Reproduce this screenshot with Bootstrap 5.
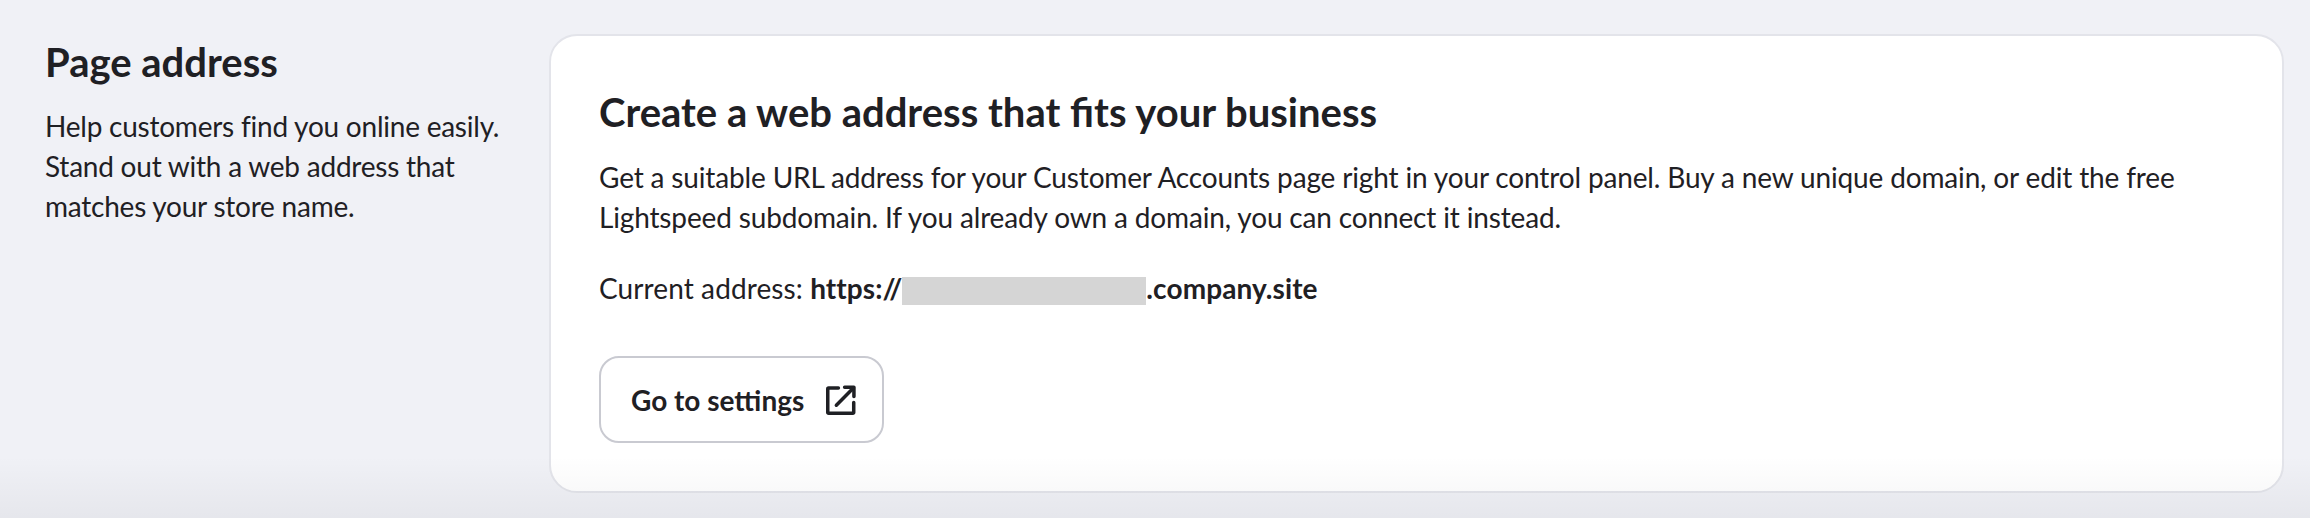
<!DOCTYPE html>
<html lang="en"><head><meta charset="utf-8"><title>Page address</title>
<link href="https://cdn.jsdelivr.net/npm/bootstrap@5.3.0/dist/css/bootstrap.min.css" rel="stylesheet">
<style>
html,body{height:518px;overflow:hidden}
body{background:#f0f1f6;font-family:Lato,"Liberation Sans",sans-serif;color:#1f2024;font-size:28px;letter-spacing:-.15px;line-height:40px;position:relative}
.page-wrap{padding:34px 26px 0 45px;gap:34px}
.side-col{width:470px;flex:none}
.side-title{font-size:40px;line-height:48px;font-weight:700;letter-spacing:0;margin:4px 0 20px}
.side-text{margin:0;letter-spacing:-.23px}
.main-card{border:2px solid #e3e4ea;border-radius:28px;background:#fff;padding:52px 48px 48px;height:459px}
.main-title{font-size:40px;line-height:48px;font-weight:700;letter-spacing:0;margin:0 0 21px}
.main-text{margin:0 0 31px}
.addr-line{margin:0 0 48px;letter-spacing:.1px}
.mask-box{display:inline-block;width:244px;height:28px;background:#d5d5d5;vertical-align:-6px}
.go-btn{font-size:28px;line-height:40px;font-weight:700;letter-spacing:0;color:#1f2024;border:2px solid #c9cad1;border-radius:20px;padding:0 26px 0 30px;height:87px;background:#fff;gap:22px}
.go-btn svg{width:30px;height:30px;flex:none}
.bottom-fade{position:absolute;left:0;right:0;bottom:0;height:62px;background:linear-gradient(to bottom,rgba(0,0,20,0),rgba(0,0,20,.045));pointer-events:none}
</style></head>
<body>
<div class="d-flex page-wrap">
  <div class="side-col">
    <h2 class="side-title">Page address</h2>
    <p class="side-text">Help customers find you online easily. Stand out with a web address that matches your store name.</p>
  </div>
  <div class="main-card flex-grow-1">
    <h3 class="main-title">Create a web address that fits your business</h3>
    <p class="main-text">Get a suitable URL address for your Customer Accounts page right in your control panel. Buy a new unique domain, or edit the free Lightspeed subdomain. If you already own a domain, you can connect it instead.</p>
    <p class="addr-line">Current address: <strong>https://<span class="mask-box"></span>.company.site</strong></p>
    <button type="button" class="btn go-btn d-inline-flex align-items-center">Go to settings
      <svg viewBox="0 0 29 29" fill="none" stroke="#1f2024" stroke-width="3.400" stroke-linecap="round" stroke-linejoin="round"><path d="M12 3H2.500a.800.800 0 0 0-.800.800V26.500a.800.800 0 0 0 .800.800H26a.800.800 0 0 0 .800-.800V17"/><path d="M10 19.500 26.500 3"/><path d="M18 2.200h9v9"/></svg>
    </button>
  </div>
</div>
<div class="bottom-fade"></div>
<script src="https://cdn.jsdelivr.net/npm/bootstrap@5.3.0/dist/js/bootstrap.bundle.min.js"></script>
</body></html>
